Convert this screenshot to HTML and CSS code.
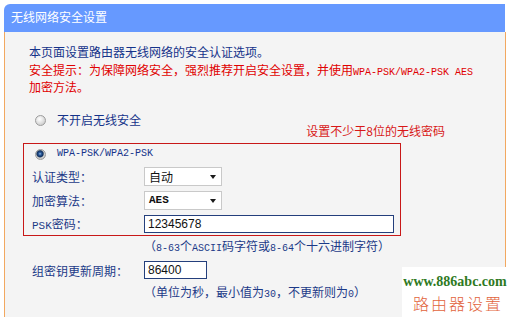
FILE: index.html
```html
<!DOCTYPE html>
<html lang="zh-CN">
<head>
<meta charset="utf-8">
<title>无线网络安全设置</title>
<link rel="stylesheet" href="styles.css">
</head>
<body>
<div class="panel">
  <div class="header">无线网络安全设置</div>
  <div class="body">
    <div class="intro">
      <p class="blue">本页面设置路由器无线网络的安全认证选项。</p>
      <p class="red">安全提示：为保障网络安全，强烈推荐开启安全设置，并使用<span class="mono">WPA-PSK/WPA2-PSK AES</span><br>加密方法。</p>
    </div>
    <div class="opt-row">
      <div class="radio-row"><span class="radio"></span><span class="blue">不开启无线安全</span></div>
      <span class="note">设置不少于8位的无线密码</span>
    </div>
    <div class="box">
      <div class="radio-row inbox"><span class="radio checked"></span><span class="mono blue">WPA-PSK/WPA2-PSK</span></div>
      <div class="field f1"><span class="label">认证类型：</span><div class="select">自动<span class="arrow"></span></div></div>
      <div class="field f1"><span class="label">加密算法：</span><div class="select"><span class="mono-b">AES</span><span class="arrow"></span></div></div>
      <div class="field f3"><span class="label"><span class="sans-ascii">PSK</span>密码：</span><div class="input wide">12345678</div></div>
    </div>
    <div class="hint">（<span class="mono">8-63</span>个<span class="mono">ASCII</span>码字符或<span class="mono">8-64</span>个十六进制字符）</div>
    <div class="field outer"><span class="label">组密钥更新周期：</span><div class="input narrow">86400</div></div>
    <div class="hint">（单位为秒，最小值为<span class="mono">30</span>，不更新则为<span class="mono">0</span>）</div>
  </div>
</div>
<div class="watermark">
  <div class="wm-url">www.886abc.com</div>
  <div class="wm-cn">路由器设置</div>
</div>
</body>
</html>
```
FILE: styles.css
```css
html, body {
  margin: 0;
  padding: 0;
  background: #ffffff;
  height: 317px;
  overflow: hidden;
}
body {
  font-family: "Noto Sans CJK SC", "Noto Sans", sans-serif;
  font-size: 12px;
  position: relative;
}
p { margin: 0; }
.panel {
  margin: 4px 0 0 4px;
  width: 502px;
}
.header {
  height: 28px;
  line-height: 26px;
  background: #6699ff;
  border-top-left-radius: 6px;
  color: #ffffff;
  padding-left: 7px;
  box-sizing: border-box;
  width: 501px;
}
.body {
  background: #f4f4f4;
  border-left: 1px solid #f2a860;
  border-right: 1px solid #f2a860;
  height: 300px;
  padding-left: 18px;
}
.blue { color: #15338a; }
.red { color: #e00000; }
.mono {
  font-family: "Liberation Mono", "DejaVu Sans Mono", monospace;
  font-size: 10px;
  line-height: 10px;
}
.mono-b {
  font-family: "Liberation Mono", monospace;
  font-size: 11px;
  line-height: 11px;
  font-weight: bold;
  color: #111;
}
.sans-ascii {
  font-family: "Liberation Mono", monospace;
  font-size: 11px;
  line-height: 11px;
}
.intro {
  padding: 11px 0 0 6px;
  line-height: 17.5px;
}
.opt-row {
  display: flex;
  align-items: flex-end;
  margin-top: 15.5px;
  height: 28px;
}
.radio-row {
  display: flex;
  align-items: center;
  align-self: flex-start;
  height: 18px;
  line-height: 18px;
  margin-left: 12px;
}
.radio {
  width: 11px;
  height: 11px;
  box-sizing: border-box;
  border-radius: 50%;
  border: 1px solid #9c9c9c;
  background: radial-gradient(circle at 40% 35%, #ffffff 0, #f0f0f0 2px, #cfcfcf 6px);
  margin-right: 11px;
  flex: none;
}
.radio.checked {
  background: radial-gradient(circle at 45% 42%, #9fc0e8 0, #2f5f9e 1.3px, #0f2f60 3px, #6a7a8a 3.6px, #dcdcdc 4.2px, #c4c4c4 5px);
}
.note {
  margin-left: auto;
  margin-right: 60px;
  line-height: 17px;
  color: #d81818;
}
.box {
  width: 376px;
  border: 1px solid #c81818;
  margin-top: 4px;
}
.radio-row.inbox {
  height: 20px;
  margin-left: 11px;
}
.field {
  display: flex;
  align-items: center;
  padding-left: 8px;
  height: 24px;
  color: #1c3a88;
}
.field.f3 { height: 23px; }
.label {
  width: 112px;
  flex: none;
}
.select {
  position: relative;
  width: 78px;
  height: 19px;
  box-sizing: border-box;
  border: 1px solid #c9c9c9;
  background: #ffffff;
  color: #111;
  padding-left: 4px;
  display: flex;
  align-items: center;
}
.arrow {
  position: absolute;
  right: 5px;
  top: 7px;
  width: 0;
  height: 0;
  border-top: 4px solid #1a1a1a;
  border-left: 3.5px solid transparent;
  border-right: 3.5px solid transparent;
}
.input {
  height: 18px;
  box-sizing: border-box;
  border: 1px solid #243f7c;
  background: #ffffff;
  color: #111;
  font-family: "Liberation Sans", Arial, sans-serif;
  font-size: 12px;
  padding-left: 3px;
  display: flex;
  align-items: center;
}
.input.wide { width: 250px; }
.input.narrow { width: 63px; }
.hint {
  margin-left: 121px;
  margin-top: 1px;
  height: 18px;
  line-height: 18px;
  color: #1c3a88;
}
.field.outer {
  padding-left: 9px;
  margin-top: 3px;
}
.watermark {
  position: absolute;
  left: 402px;
  top: 267px;
  width: 110px;
  height: 50px;
  background: #ffffff;
  text-align: center;
}
.wm-url {
  font-family: "Liberation Serif", serif;
  font-weight: bold;
  font-size: 14px;
  color: #2f7a1f;
  line-height: 16px;
  margin-top: 7px;
  margin-left: -4px;
}
.wm-cn {
  font-family: "Noto Sans CJK SC", sans-serif;
  font-weight: 300;
  font-size: 16px;
  letter-spacing: 2px;
  color: #e2643c;
  line-height: 20px;
  margin-top: 3px;
  margin-left: 2px;
}
```
